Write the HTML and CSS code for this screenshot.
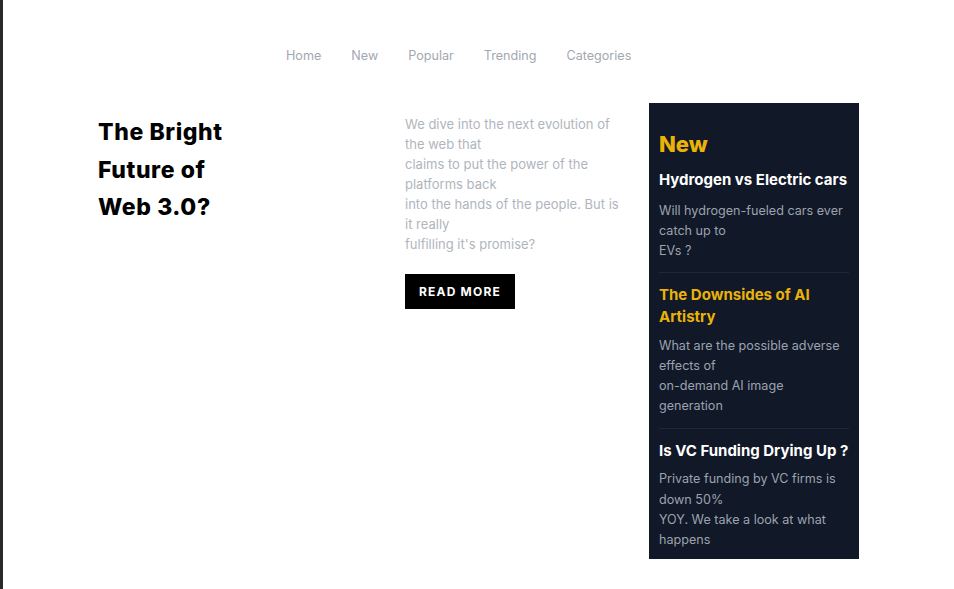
FILE: index.html
```html
<!DOCTYPE html>
<html lang="en">
<head>
<meta charset="utf-8">
<title>News</title>
<link rel="stylesheet" href="styles.css">
</head>
<body>
<div class="page">
  <nav class="nav">
    <a href="#">Home</a>
    <a href="#">New</a>
    <a href="#">Popular</a>
    <a href="#">Trending</a>
    <a href="#">Categories</a>
  </nav>
  <main class="main">
    <h1 class="headline">The Bright<br>Future of<br>Web 3.0?</h1>
    <div class="intro">
      <p class="intro-text">We dive into the next evolution of the web that<br>claims to put the power of the platforms back<br>into the hands of the people. But is it really<br>fulfilling it's promise?</p>
      <a class="btn" href="#">READ MORE</a>
    </div>
    <aside class="sidebar">
      <h2 class="side-title">New</h2>
      <div class="item first">
        <h3 class="item-title">Hydrogen vs Electric cars</h3>
        <p class="item-text">Will hydrogen-fueled cars ever catch up to<br>EVs ?</p>
      </div>
      <div class="item">
        <h3 class="item-title accent">The Downsides of AI Artistry</h3>
        <p class="item-text">What are the possible adverse effects of<br>on-demand AI image generation</p>
      </div>
      <div class="item last">
        <h3 class="item-title">Is VC Funding Drying Up ?</h3>
        <p class="item-text">Private funding by VC firms is down 50%<br>YOY. We take a look at what happens</p>
      </div>
    </aside>
  </main>
</div>
</body>
</html>
```

FILE: styles.css
```css
* { box-sizing: border-box; }
html, body { margin: 0; padding: 0; background: #fff; }
body {
  font-family: Inter, "Liberation Sans", Arial, sans-serif;
  border-left: 3px solid #2a2a2a;
  min-height: 589px;
}
.page { width: 951px; }
.nav {
  display: flex;
  gap: 30px;
  padding: 47px 0 0 283px;
  height: 103px;
}
.nav a {
  color: #a3a8b0;
  font-size: 12.6px;
  line-height: 18px;
  text-decoration: none;
}
.main {
  display: flex;
  align-items: flex-start;
  padding-left: 95px;
}
.headline {
  width: 307px;
  margin: 11px 0 0;
  font-size: 23px;
  line-height: 37.5px;
  font-weight: 800;
  letter-spacing: 0.6px;
  color: #000;
}
.intro {
  width: 244px;
  padding-top: 11px;
}
.intro-text {
  width: 214px;
  margin: 0 0 20px;
  font-size: 13px;
  line-height: 20px;
  color: #b0b5bd;
}
.btn {
  display: inline-block;
  width: 110px;
  height: 35px;
  line-height: 35px;
  text-align: center;
  background: #000;
  color: #fff;
  font-size: 12px;
  font-weight: 700;
  letter-spacing: 1.2px;
  text-decoration: none;
}
.sidebar {
  width: 210px;
  background: #111827;
  padding: 25px 10px 9px;
}
.side-title {
  margin: 0;
  font-size: 22px;
  line-height: 32px;
  font-weight: 800;
  color: #eab308;
}
.item {
  border-bottom: 1px solid #1f2937;
  padding: 11px 0 12px;
}
.item.first { padding-top: 9px; padding-bottom: 10px; }
.item.first .item-title { margin-bottom: 10px; }
.item.last { border-bottom: none; padding-bottom: 0; }
.item-title {
  margin: 0 0 8px;
  font-size: 15px;
  line-height: 22px;
  font-weight: 700;
  color: #fff;
}
.item.last .item-title { margin-bottom: 7px; }
.item-title.accent { color: #eab308; }
.item-text {
  margin: 0;
  font-size: 12.6px;
  line-height: 20.2px;
  color: #9ca3af;
}
```
